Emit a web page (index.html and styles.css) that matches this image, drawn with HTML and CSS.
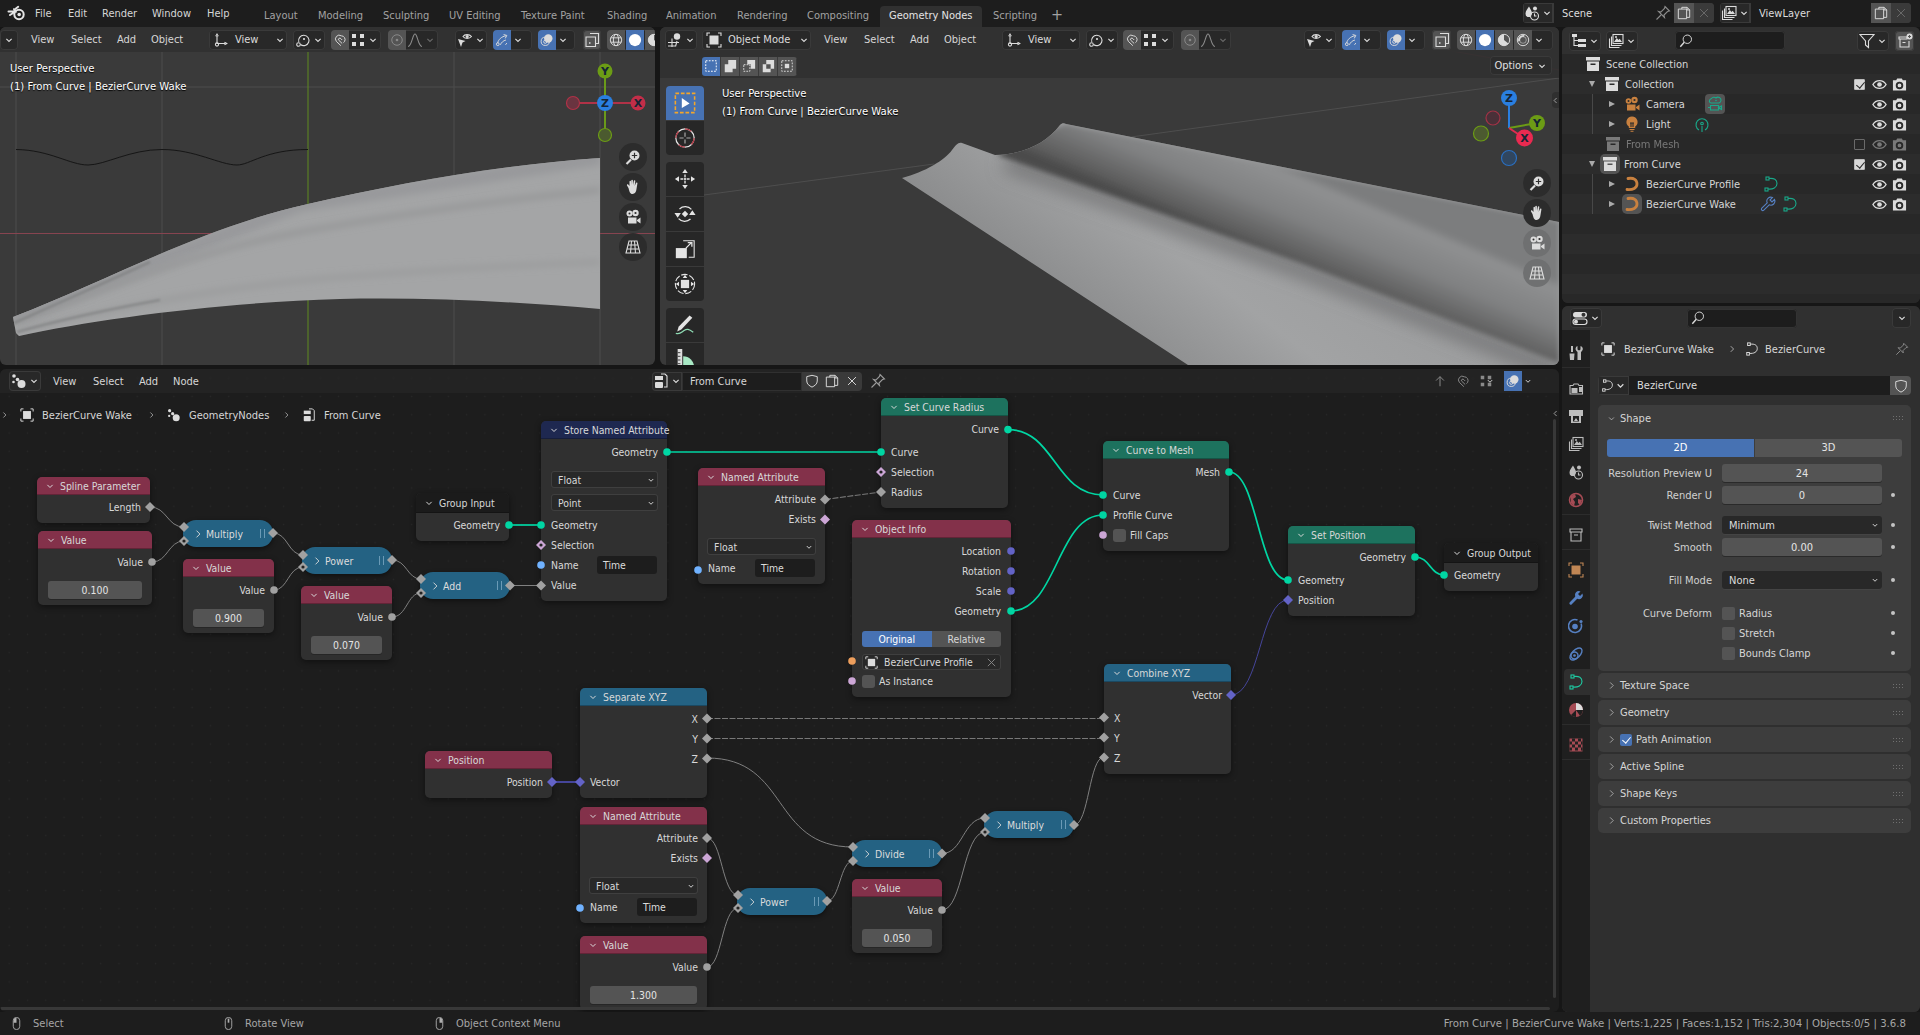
FILE: index.html
```html
<!DOCTYPE html>
<html lang="en">
<head>
<meta charset="utf-8">
<title>Blender - Geometry Nodes</title>
<link rel="stylesheet" href="styles.css">
</head>
<body>
<svg class="defs" aria-hidden="true">
  <symbol id="i-chev" viewBox="0 0 16 16"><path d="M4.5 6.5 8 10l3.5-3.5"/></symbol>
  <symbol id="i-chevr" viewBox="0 0 16 16"><path d="M6 3.5 10.5 8 6 12.5"/></symbol>
  <symbol id="i-logo" viewBox="0 0 20 16"><circle cx="12" cy="9.5" r="4.7" stroke-width="2"/><circle cx="12.2" cy="9.5" r="1.8" fill="currentColor" stroke="none"/><path d="M1.5 6.5h7L7 4.2M3 10l5.5-3.5M8 4.2l3.2-2.4" stroke-width="2" stroke-linecap="round"/></symbol>
  <symbol id="i-v3d" viewBox="0 0 16 16"><circle cx="10" cy="4.5" r="3.2" fill="currentColor" stroke="none"/><path d="M1 10.5h11M5 6.5v8.5M1 14h8M10 9l-1.500 5.500"/></symbol>
  <symbol id="i-axis" viewBox="0 0 16 16"><path d="M4 4v7.500h8M2.700 4.300 4 2l1.300 2.300M11.500 10.200l2.300 1.300-2.300 1.300"/><circle cx="4" cy="12.500" r="1.600"/></symbol>
  <symbol id="i-pivot" viewBox="0 0 16 16"><path d="M5.500 12.500A5.200 5.200 0 1 0 3.800 10"/><circle cx="9" cy="7" r="1.100" fill="currentColor" stroke="none"/><circle cx="3.500" cy="12.500" r="1.800"/></symbol>
  <symbol id="i-magnet" viewBox="0 0 16 16"><path d="M9 14.500 3.800 9.500A4.300 4.300 0 0 1 9.500 3.200 4.300 4.300 0 0 1 13.300 9.500L12 11"/><path d="M10.500 12 6.500 8.200A1.500 1.500 0 0 1 9 6.500l1.500 1.500"/></symbol>
  <symbol id="i-grid4" viewBox="0 0 16 16"><path fill="currentColor" stroke="none" d="M2 2h4v4H2zM10 2h4v4h-4zM2 10h4v4H2zM10 10h4v4h-4z"/></symbol>
  <symbol id="i-prop" viewBox="0 0 16 16"><circle cx="8" cy="8" r="6"/><circle cx="8" cy="8" r="1.500" fill="currentColor" stroke="none"/></symbol>
  <symbol id="i-fall" viewBox="0 0 16 16"><path d="M1 14.500C5 14 5.500 2 8 2s3 12 7 12.500"/></symbol>
  <symbol id="i-vis" viewBox="0 0 16 16"><path d="M6 4.500C7.500 2 12.500 2 14.500 4.500 12.500 7 7.500 7 6 4.500z"/><circle cx="10.200" cy="4.500" r="1.500" fill="currentColor" stroke="none"/><path fill="currentColor" stroke="none" d="M1 7l7.500 2-3 1.500L4 15z"/></symbol>
  <symbol id="i-gizmo" viewBox="0 0 16 16"><path d="M3 11.500C3.800 7.500 7.500 4 12.500 3.200M9.800 1.800l3.700 1-1.800 3.400M6.200 13.500C7 11 9.500 8.700 12.500 8"/><circle cx="3.200" cy="12.800" r="1.600"/><path d="M12 13.500l1.500-2"/></symbol>
  <symbol id="i-over" viewBox="0 0 16 16"><circle cx="6" cy="9.500" r="4.700"/><circle cx="9.500" cy="6.200" r="4.800" fill="currentColor" stroke="none"/><circle cx="6" cy="10" r="1.800"/></symbol>
  <symbol id="i-xray" viewBox="0 0 16 16"><path d="M6 1.500h8.500v10H12M2 5h9.500v9.500H2z"/><path d="M5 11h1.500M9 8v.1" stroke-width="1.600"/></symbol>
  <symbol id="i-wire" viewBox="0 0 16 16"><circle cx="8" cy="8" r="6.500"/><ellipse cx="8" cy="8" rx="3" ry="6.500"/><path d="M2 5.500h12M2 10.500h12"/></symbol>
  <symbol id="i-solid" viewBox="0 0 16 16"><circle cx="8" cy="8" r="7" fill="currentColor" stroke="none"/></symbol>
  <symbol id="i-mat" viewBox="0 0 16 16"><circle cx="8" cy="8" r="6.500"/><path fill="currentColor" stroke="none" d="M8 1.500V8l5 4A6.500 6.500 0 0 1 1.500 8 6.500 6.500 0 0 1 8 1.500z"/></symbol>
  <symbol id="i-rend" viewBox="0 0 16 16"><circle cx="8" cy="8" r="6.500"/><path d="M3.500 9.500A5 5 0 0 1 9.500 3.500" stroke-width="2"/><circle cx="8" cy="8" r="3.800" stroke-width=".6"/></symbol>
  <symbol id="i-s1" viewBox="0 0 16 16"><rect x="2" y="2" width="12" height="12" stroke-dasharray="2 1.500"/></symbol>
  <symbol id="i-s2" viewBox="0 0 16 16"><path fill="currentColor" stroke="none" d="M6 1h9v10h-4v4H2V6h4z"/></symbol>
  <symbol id="i-s3" viewBox="0 0 16 16"><path fill="currentColor" stroke="none" d="M6 1h9v10h-5V6H6z"/><path d="M2 6.500h7v7.500H2z" stroke-dasharray="2 1.300"/></symbol>
  <symbol id="i-s4" viewBox="0 0 16 16"><path fill="currentColor" stroke="none" fill-rule="evenodd" d="M6 1h9v10h-4v4H2V6h4zM6 6v5h5V6z"/></symbol>
  <symbol id="i-s5" viewBox="0 0 16 16"><rect x="2" y="2" width="12" height="12" stroke-dasharray="2 1.500"/><rect x="5.500" y="5.500" width="5" height="5" fill="currentColor" stroke="none"/></symbol>
  <symbol id="i-tsel" viewBox="0 0 24 24"><rect x="1.500" y="1.500" width="21" height="21" style="stroke:#f4a62a" stroke-width="1.700" stroke-dasharray="4 2"/><path fill="#fff" stroke="none" d="M8.500 6.500 17 12.500l-8.500 5z"/></symbol>
  <symbol id="i-tcur" viewBox="0 0 24 24"><circle cx="12" cy="12" r="10" stroke="#e8e8e8" stroke-width="1.300"/><path d="M12 2a10 10 0 0 1 7 2.800M22 12a10 10 0 0 1-3 7.100M12 22a10 10 0 0 1-7-2.800M2 12a10 10 0 0 1 3-7.100" stroke="#b0333f" stroke-width="1.300"/><path d="M12 6v4.500M12 13.500V18M6 12h4.500M13.500 12H18" stroke="#aaa" stroke-width="1.300"/></symbol>
  <symbol id="i-tmov" viewBox="0 0 24 24"><path fill="currentColor" stroke="none" d="M12 1l3 4.500H9zM12 23l-3-4.500h6zM1 12l4.500-3v6zM23 12l-4.500 3V9z"/><path d="M12 7v3M12 14v3M7 12h3M14 12h3" stroke-width="1.500"/><rect x="10.800" y="10.800" width="2.400" height="2.400" fill="currentColor" stroke="none" transform="rotate(45 12 12)"/></symbol>
  <symbol id="i-trot" viewBox="0 0 24 24"><path d="M6 6.500A9 9 0 0 1 19 7M18 17.500A9 9 0 0 1 5 17" stroke-width="1.300"/><path fill="currentColor" stroke="none" d="M20 8l3.500 5h-7zM4 16l-3.500-5h7z"/><rect x="9.500" y="9.500" width="5" height="5" fill="currentColor" stroke="none" transform="rotate(45 12 12)"/></symbol>
  <symbol id="i-tsca" viewBox="0 0 24 24"><path d="M10 3h12v18H16" stroke-width="1.200"/><rect x="2" y="11" width="12" height="11" fill="currentColor" stroke="none"/><path d="M13 11l6-6M15 5h4.500v4.500" stroke-width="1.400"/></symbol>
  <symbol id="i-ttra" viewBox="0 0 24 24"><circle cx="12" cy="12" r="10.500" stroke-width="1.200" stroke-dasharray="7 2"/><rect x="7.500" y="7.500" width="9" height="9" fill="currentColor" stroke="none"/><path fill="currentColor" stroke="none" d="M12 2l2.500 3.500h-5zM12 22l-2.500-3.500h5zM2 12l3.500-2.500v5zM22 12l-3.500 2.500v-5z"/></symbol>
  <symbol id="i-tann" viewBox="0 0 24 24"><path fill="currentColor" stroke="none" d="M17 1.500l3 2.500L8 17l-4.500 2L5 14z"/><path d="M2 21c4 2 6-1 9-3s5-2 10 2" stroke="#8fdcb4" stroke-width="1.400"/></symbol>
  <symbol id="i-tmea" viewBox="0 0 24 24"><path fill="#a8e8c4" stroke="none" d="M10 8a12 12 0 0 1 12 12v4H10z"/><path d="M4 0h5v24H4z" fill="#ddd" stroke="none"/><path d="M4 4h3M4 8h3M4 12h3M4 16h3" stroke="#333"/></symbol>
  <symbol id="i-nzoom" viewBox="0 0 16 16"><circle cx="9.500" cy="6.500" r="5" fill="currentColor" stroke="none"/><path d="M6 10.500 1.500 15" stroke-width="2.200"/><path d="M9.500 3.800v5.400M6.800 6.500h5.400" stroke="#2e2e2e" stroke-width="1.200"/></symbol>
  <symbol id="i-nhand" viewBox="0 0 16 16"><path fill="currentColor" stroke="none" d="M3.500 9 2 6.500c-.5-1 .8-1.700 1.400-.8L4.500 7V2.500c0-1.100 1.500-1.100 1.500 0V6l.3-4.500c0-1.100 1.600-1.100 1.600 0L8 6l.8-4c.2-1 1.600-.8 1.500.3L9.700 7l1.200-3c.4-1 1.800-.5 1.500.5L11.500 10c-.3 2.800-1.500 5-4 5-2 0-3-1.500-4-6z"/></symbol>
  <symbol id="i-ncam" viewBox="0 0 16 16"><circle cx="4.500" cy="4.500" r="3" fill="currentColor" stroke="none"/><circle cx="10.500" cy="4" r="3.200" fill="currentColor" stroke="none"/><rect x="3" y="8.500" width="8.500" height="6" fill="currentColor" stroke="none"/><path fill="currentColor" stroke="none" d="M12 11l3.500-2.500v6L12 12z"/><circle cx="4.500" cy="4.500" r="1" fill="#2e2e2e" stroke="none"/><circle cx="10.500" cy="4" r="1.100" fill="#2e2e2e" stroke="none"/></symbol>
  <symbol id="i-ngrid" viewBox="0 0 16 16"><path d="M4 2h8l3 12H1zM3 6h10M2 10h12M6.500 2 5.500 14M9.500 2l1 12"/></symbol>
  <symbol id="i-scene" viewBox="0 0 16 16"><path fill="currentColor" stroke="none" d="M5 1.500c1.500 3 3 4.500 3 7a3 3 0 0 1-2 2.800V12H3.500A3.300 3.300 0 0 1 1.500 8.800C1.500 6 3.500 4 5 1.500z"/><circle cx="11" cy="3.500" r="2" fill="currentColor" stroke="none"/><circle cx="10.500" cy="11" r="4"/><path d="M10.500 8.500V11h2"/></symbol>
  <symbol id="i-layer" viewBox="0 0 16 16"><rect x="5" y="1.500" width="10" height="9" fill="none"/><path fill="currentColor" stroke="none" d="M6 9l2.800-4 1.700 2 1.200-1.200L14 9z"/><circle cx="8" cy="4" r="1" fill="currentColor" stroke="none"/><path d="M3.500 3.500v9h10M1.500 5.500v9h10"/></symbol>
  <symbol id="i-pin" viewBox="0 0 16 16"><path d="M10 1.500 14.500 6l-2 .5L9 10l.5 2.500L3.500 6.500 6 7l3.500-3.500zM6 10l-4.500 4.500"/></symbol>
  <symbol id="i-copy" viewBox="0 0 16 16"><path d="M5.500 3.500V1.500h6l3 3v8.500H11"/><path d="M1.500 3.500h9.500v11H1.500zM11.500 1.500v3h3"/></symbol>
  <symbol id="i-x" viewBox="0 0 16 16"><path d="M3.500 3.500l9 9M12.500 3.500l-9 9"/></symbol>
  <symbol id="i-tree" viewBox="0 0 16 16"><path fill="currentColor" stroke="none" d="M1 1h5v3H1zM7 6h8v3H7zM7 11h8v3H7z"/><path d="M3 4v8.500h4M3 7.500h4"/></symbol>
  <symbol id="i-search" viewBox="0 0 16 16"><circle cx="9.500" cy="6" r="4.800"/><path d="M6 9.500 1.500 14.500" stroke-width="1.600"/></symbol>
  <symbol id="i-filter" viewBox="0 0 16 16"><path d="M1 1.500h14L9.500 8v6.500L6.500 12V8z"/></symbol>
  <symbol id="i-newc" viewBox="0 0 16 16"><path d="M2 4h8v2H2zM3 6v8h9V8M5.500 9.500h3"/><circle cx="12.500" cy="3.500" r="3" fill="currentColor" stroke="none"/><path d="M12.500 2v3M11 3.500h3" stroke="#555"/></symbol>
  <symbol id="i-coll" viewBox="0 0 16 16"><path fill="currentColor" stroke="none" fill-rule="evenodd" d="M1 1h14v3.500H1zM2 5.500h12V15H2zM5.500 7.500v1.500h5V7.500z"/></symbol>
  <symbol id="i-ocam" viewBox="0 0 16 16"><circle cx="4.500" cy="5" r="2.800" fill="currentColor" stroke="none"/><circle cx="10.500" cy="4" r="3.200" fill="currentColor" stroke="none"/><rect x="3" y="8.500" width="8.500" height="6" fill="currentColor" stroke="none"/><path fill="currentColor" stroke="none" d="M12 11l3.500-2.500v6L12 12z"/><circle cx="4.500" cy="5" r="1" fill="#2b2b2b" stroke="none"/><circle cx="10.500" cy="4" r="1.100" fill="#2b2b2b" stroke="none"/></symbol>
  <symbol id="i-olight" viewBox="0 0 16 16"><path fill="currentColor" stroke="none" d="M8 .5a5.500 5.500 0 0 1 3.200 10v1.500H4.800v-1.500A5.500 5.500 0 0 1 8 .5zM5.500 13h5v1h-5zM6.500 14.800h3v1h-3z"/><path d="M6 7h4M7 7v4M9 7v4" stroke="#2b2b2b"/></symbol>
  <symbol id="i-ocurve" viewBox="0 0 16 16"><path d="M4 2.500c6-1 9 1.500 9 5.500s-4 6-10 5.500" stroke-width="2.800" stroke-linecap="round"/></symbol>
  <symbol id="i-dcam" viewBox="0 0 16 16"><path d="M2.500 6a3 3 0 0 1 2-3.500 3 3 0 0 1 4.500-.5 3 3 0 0 1 5 2.500 3 3 0 0 1-2 2.500H4a3 3 0 0 1-1.500-1z"/><circle cx="9" cy="4.500" r=".8" fill="currentColor" stroke="none"/><path d="M3.500 9.500h8v4.500h-8zM11.500 11.500l3-1.500v3.500zM1 11.500h2.500"/></symbol>
  <symbol id="i-dlight" viewBox="0 0 16 16"><path d="M5 14A6 6 0 1 1 11 14M8 16v-6"/><circle cx="8" cy="7.500" r="1.300" /></symbol>
  <symbol id="i-dcurve" viewBox="0 0 16 16"><path d="M6 2.500c5-.5 8 1 8 5s-4 6-9 5.500"/><rect x="3" y="1" width="3" height="3"/><rect x="2" y="12" width="3" height="3"/></symbol>
  <symbol id="i-wrench" viewBox="0 0 16 16"><path d="M14.500 3.500 12 6 10 4l2.500-2.500a4 4 0 0 0-5.300 5.300L1.800 12.200a1.400 1.400 0 0 0 2 2l5.400-5.400a4 4 0 0 0 5.300-5.300z"/></symbol>
  <symbol id="i-wrenchf" viewBox="0 0 16 16"><path fill="currentColor" stroke="none" d="M14.500 3.500 12 6 10 4l2.500-2.500a4 4 0 0 0-5.300 5.300L1.800 12.200a1.400 1.400 0 0 0 2 2l5.400-5.400a4 4 0 0 0 5.300-5.300z"/></symbol>
  <symbol id="i-eye" viewBox="0 0 16 16"><path d="M1 8c3-5.500 11-5.500 14 0-3 5.500-11 5.500-14 0z" stroke-width="1.500"/><circle cx="8" cy="8" r="2.500" fill="currentColor" stroke="none"/></symbol>
  <symbol id="i-rcam" viewBox="0 0 16 16"><path fill="currentColor" stroke="none" fill-rule="evenodd" d="M1 3.500h3.500l1-2h5l1 2H15v11H1zM8 5a4 4 0 1 0 0 8 4 4 0 0 0 0-8zM8 7a2 2 0 1 1 0 4 2 2 0 0 1 0-4z"/></symbol>
  <symbol id="i-props" viewBox="0 0 16 16"><rect x="1" y="2" width="14" height="5.500" rx="2.700" fill="currentColor" stroke="none"/><rect x="1" y="9" width="14" height="5.500" rx="2.700"/><circle cx="11.500" cy="4.700" r="2" fill="#333" stroke="none"/><circle cx="4" cy="11.700" r="2" fill="currentColor" stroke="none"/></symbol>
  <symbol id="i-obj" viewBox="0 0 16 16"><path d="M1 4V1h3M12 1h3v3M1 12v3h3M15 12v3h-3"/><rect x="3.500" y="3.500" width="9" height="9" fill="currentColor" stroke="none"/></symbol>
  <symbol id="i-tool" viewBox="0 0 16 16"><path fill="currentColor" stroke="none" d="M9.500 1v3.500l1.500 1 1.500-1V1a3 3 0 0 1 1.500 5l-1 1v8h-3.500V7l-1-1a3 3 0 0 1 1-5zM3 1h2v6H3zM1.500 8.500h5l-.5 6.500H2z"/></symbol>
  <symbol id="i-rnd" viewBox="0 0 16 16"><path d="M2 5.500h3l1-1.500h4l1 1.500h3.500v8.500H2z"/><path fill="currentColor" stroke="none" d="M11 7h3v5h-3zM3.500 8h6v5h-6z"/></symbol>
  <symbol id="i-out" viewBox="0 0 16 16"><path fill="currentColor" stroke="none" d="M1 2h14v6h-2v7H3V8H1zM5 8v5.500h6V8z"/><path fill="currentColor" stroke="none" d="M6 13l2-3 2 3z"/></symbol>
  <symbol id="i-world" viewBox="0 0 16 16"><circle cx="8" cy="8" r="6.500" stroke-width="1.600"/><path fill="currentColor" stroke="none" d="M3 4l4-2 1 3-3 2 2 3-1 4-3-3zM10 7l4 1-2 5-2-2z"/></symbol>
  <symbol id="i-cbox" viewBox="0 0 16 16"><path d="M2 2h12v3H2zM3 5v9h10V5M6 8h4"/></symbol>
  <symbol id="i-objt" viewBox="0 0 16 16"><path d="M1 4V1h3M12 1h3v3M1 12v3h3M15 12v3h-3" stroke="#c08654"/><rect x="3.500" y="3.500" width="9" height="9" fill="#c08654" stroke="none"/></symbol>
  <symbol id="i-part" viewBox="0 0 16 16"><path d="M13 5.500A6.500 6.500 0 1 1 9.500 2" stroke-width="1.600"/><circle cx="7" cy="8.500" r="2.800" fill="currentColor" stroke="none"/><circle cx="13" cy="3.500" r="1.600" fill="currentColor" stroke="none"/></symbol>
  <symbol id="i-phys" viewBox="0 0 16 16"><ellipse cx="8" cy="8" rx="7.500" ry="4" transform="rotate(-45 8 8)" stroke-width="1.400"/><circle cx="6.500" cy="9.500" r="3.500" stroke-width="1.400"/><circle cx="6.500" cy="9.500" r="1.300" fill="currentColor" stroke="none"/></symbol>
  <symbol id="i-matt" viewBox="0 0 16 16"><circle cx="8" cy="8" r="7" fill="#a54b54" stroke="none"/><path fill="#ddd" stroke="none" d="M8 1a7 7 0 0 1 7 7H8z"/><path fill="#1f1f1f" stroke="none" d="M8 8h7a7 7 0 0 1-3 5.700zM8 8v7a7 7 0 0 1-5-2z"/></symbol>
  <symbol id="i-tex" viewBox="0 0 16 16"><rect x="1.500" y="1.500" width="13" height="13" fill="#a54b54" stroke="none"/><path fill="#222" stroke="none" d="M4 1.500h3v3H4zM10 1.500h3v3h-3zM1.500 4.500H4v3H1.500zM7 4.500h3v3H7zM13 4.500h1.500v3H13zM4 7.500h3v3H4zM10 7.500h3v3h-3zM1.500 10.500H4v3H1.500zM7 10.500h3v3H7zM13 10.500h1.500v3H13z"/></symbol>
  <symbol id="i-shield" viewBox="0 0 16 16"><path d="M8 1.500 14 3v5c0 3.500-3 5.500-6 7-3-1.500-6-3.500-6-7V3z"/></symbol>
  <symbol id="i-mods" viewBox="0 0 16 16"><circle cx="3" cy="3" r="1.800" fill="currentColor" stroke="none"/><circle cx="6.500" cy="6.500" r="1.800" fill="currentColor" stroke="none"/><circle cx="2.500" cy="9" r="1.300" fill="currentColor" stroke="none"/><circle cx="10.500" cy="11" r="4" fill="currentColor" stroke="none"/></symbol>
  <symbol id="i-ngroup" viewBox="0 0 16 16"><path d="M8 1h4l2 2v11h-3"/><rect x="2" y="3" width="8" height="4" fill="currentColor" stroke="none"/><rect x="2" y="9" width="8" height="6" fill="currentColor" stroke="none" rx="1"/></symbol>
  <symbol id="i-mouse" viewBox="0 0 16 16"><path d="M4 4.500a4 4 0 0 1 8 0v7a4 4 0 0 1-8 0z"/><path fill="currentColor" stroke="none" d="M8 1a3.500 3.500 0 0 1 3.500 3.500V7H8z"/></symbol>
  <symbol id="i-mousel" viewBox="0 0 16 16"><path d="M4 4.500a4 4 0 0 1 8 0v7a4 4 0 0 1-8 0z"/><path fill="currentColor" stroke="none" d="M8 1a3.500 3.500 0 0 0-3.500 3.500V7H8z"/></symbol>
  <symbol id="i-mousem" viewBox="0 0 16 16"><path d="M4 4.500a4 4 0 0 1 8 0v7a4 4 0 0 1-8 0z"/><path fill="currentColor" stroke="none" d="M7 2h2v5H7z"/></symbol>
  <symbol id="i-up" viewBox="0 0 16 16"><path d="M8 14V3M3.500 7.500 8 3l4.500 4.500"/></symbol>
  <symbol id="d" viewBox="-6 -6 12 12" overflow="visible"><path d="M0-5 5 0 0 5-5 0z"/></symbol>
  <symbol id="h" viewBox="-6 -6 12 12" overflow="visible"><path d="M0-5 5 0 0 5-5 0z"/><circle r="1.600" fill="#222"/></symbol>
</svg>

<div class="app">
  <header class="topbar">
    <svg class="ic logo"><use href="#i-logo"/></svg>
    <nav class="mainmenu"><span>File</span><span>Edit</span><span>Render</span><span>Window</span><span>Help</span></nav>
    <nav class="tabs">
      <span>Layout</span><span>Modeling</span><span>Sculpting</span><span>UV Editing</span><span>Texture Paint</span><span>Shading</span><span>Animation</span><span>Rendering</span><span>Compositing</span><span class="on">Geometry Nodes</span><span>Scripting</span><span class="plus">+</span>
    </nav>
    <div class="scenegroup scene-a">
      <div class="box ib"><svg class="ic"><use href="#i-scene"/></svg><svg class="ic ch"><use href="#i-chev"/></svg></div>
      <div class="field"><span>Scene</span><svg class="ic dim"><use href="#i-pin"/></svg></div>
      <div class="sq lit"><svg class="ic"><use href="#i-copy"/></svg></div><div class="sq"><svg class="ic off"><use href="#i-x"/></svg></div>
    </div>
    <div class="scenegroup scene-b">
      <div class="box ib"><svg class="ic"><use href="#i-layer"/></svg><svg class="ic ch"><use href="#i-chev"/></svg></div>
      <div class="field"><span>ViewLayer</span></div>
      <div class="sq lit"><svg class="ic"><use href="#i-copy"/></svg></div><div class="sq"><svg class="ic off"><use href="#i-x"/></svg></div>
    </div>
  </header>

  <main class="screen">
    <div class="leftcol">
      <div class="toprow">
        <section class="area vp vp-l">
          <svg class="scene3d" viewBox="0 27 655 338" aria-hidden="true">
            <defs>
              <filter id="b3" x="-20%" y="-50%" width="140%" height="200%"><feGaussianBlur stdDeviation="3.500"/></filter>
              <filter id="b1" x="-20%" y="-50%" width="140%" height="200%"><feGaussianBlur stdDeviation="1.200"/></filter>
              <clipPath id="cl"><path d="M13 317C110 280 200 228 308 204 400 183 500 165 600 158L600 309C520 302 430 297 340 299 230 302 100 318 19 336L16 333z"/></clipPath>
            </defs>
            <path class="g" d="M16 52V365M162 52V365M454 52V365M600 52V365M0 87H655"/>
            <path class="gx" d="M0 233.500H655"/>
            <path class="gy" d="M308 52V365"/>
            <path d="M16 149.500C50 150 70 165 88 165 105 165 130 149.500 162 149.500 195 149.500 220 165 237 165 250 165 265 149.500 308 149.500" fill="none" stroke="#161616" stroke-width="1"/>
            <path d="M13 317C110 280 200 228 308 204 400 183 500 165 600 158L600 309C520 302 430 297 340 299 230 302 100 318 19 336L16 333z" fill="#a4a5a6"/>
            <g clip-path="url(#cl)">
              <path d="M600 158 300 205 13 317" fill="none" stroke="#98999b" stroke-width="14" filter="url(#b3)"/>
              <path d="M14 323C120 285 200 250 300 232 400 214 500 200 600 190" fill="none" stroke="#949596" stroke-width="5" filter="url(#b3)"/>
              <path d="M17 332C120 307 220 287 330 278 430 270 520 265 600 262" fill="none" stroke="#98999a" stroke-width="4" filter="url(#b3)"/>
              <path d="M14 323C60 302 100 285 150 262" fill="none" stroke="#858687" stroke-width="2.500" filter="url(#b1)"/>
              <path d="M17 332C60 320 110 309 160 300" fill="none" stroke="#88898a" stroke-width="2.500" filter="url(#b1)"/>
            </g>
            <g class="giz">
              <path d="M605 103V71M605 103V135" stroke="#6a9a1a" stroke-width="2"/><path d="M573 103H638" stroke="#b03247" stroke-width="2"/>
              <circle cx="605" cy="71" r="7.500" fill="#6c9c15"/><circle cx="605" cy="135" r="6.500" fill="#4b5a2f" stroke="#6c9c15" stroke-width="1.200"/>
              <circle cx="638" cy="103" r="7.500" fill="#c22e48"/><circle cx="573" cy="103" r="6.500" fill="#6a3440" stroke="#b03247" stroke-width="1.200"/>
              <circle cx="605" cy="103" r="8" fill="#2a7fe0"/>
              <text x="605" y="75">Y</text><text x="638" y="107">X</text><text x="605" y="107">Z</text>
            </g>
          </svg>
          <div class="hbar">
            <div class="box w18 c"><svg class="ic ch"><use href="#i-chev"/></svg></div>
            <nav class="menus"><span>View</span><span>Select</span><span>Add</span><span>Object</span></nav>
            <div class="box w78"><svg class="ic"><use href="#i-axis"/></svg><span class="bt">View</span><svg class="ic ch end"><use href="#i-chev"/></svg></div>
            <div class="box w32 ml6"><svg class="ic"><use href="#i-pivot"/></svg><svg class="ic ch"><use href="#i-chev"/></svg></div>
            <div class="box w50 ml6"><span class="seg lit"><svg class="ic"><use href="#i-magnet"/></svg></span><svg class="ic"><use href="#i-grid4"/></svg><svg class="ic ch"><use href="#i-chev"/></svg></div>
            <div class="box w50 ml7"><span class="seg lit"><svg class="ic dim"><use href="#i-prop"/></svg></span><svg class="ic dim"><use href="#i-fall"/></svg><svg class="ic ch off"><use href="#i-chev"/></svg></div>
            <div class="box w32 ml17"><svg class="ic"><use href="#i-vis"/></svg><svg class="ic ch"><use href="#i-chev"/></svg></div>
            <div class="box w39 ml6"><span class="seg blue"><svg class="ic"><use href="#i-gizmo"/></svg></span><svg class="ic ch"><use href="#i-chev"/></svg></div>
            <div class="box w37 ml6"><span class="seg blue"><svg class="ic"><use href="#i-over"/></svg></span><svg class="ic ch"><use href="#i-chev"/></svg></div>
            <div class="box w18 ml8 lit"><svg class="ic"><use href="#i-xray"/></svg></div>
            <div class="box w81 ml6"><span class="seg lit"><svg class="ic"><use href="#i-wire"/></svg></span><span class="seg blue"><svg class="ic wh"><use href="#i-solid"/></svg></span><span class="seg lit"><svg class="ic"><use href="#i-mat"/></svg></span></div>
          </div>
          <div class="overlaytext ot-l"><p>User Perspective</p><p>(1) From Curve | BezierCurve Wake</p></div>
          <div class="navstack nav-l">
            <span><svg class="ic"><use href="#i-nzoom"/></svg></span><span><svg class="ic"><use href="#i-nhand"/></svg></span><span><svg class="ic"><use href="#i-ncam"/></svg></span><span><svg class="ic"><use href="#i-ngrid"/></svg></span>
          </div>
        </section>

        <section class="area vp vp-r">
          <svg class="scene3d" viewBox="660 27 899 338" aria-hidden="true">
            <defs>
              <clipPath id="cr"><path d="M902 178C925 172 945 160 952 150 956 145 958 142 962 143L995 155C1020 155 1045 145 1060 125 1062 123 1064 123 1066 124L1559 222V365H1188z"/></clipPath>
              <filter id="b14" x="-20%" y="-50%" width="140%" height="200%"><feGaussianBlur stdDeviation="9"/></filter>
              <filter id="b3r" x="-20%" y="-50%" width="140%" height="200%"><feGaussianBlur stdDeviation="2.500"/></filter>
              <linearGradient id="gr" x1="1050" y1="300" x2="1200" y2="100" gradientUnits="userSpaceOnUse"><stop offset="0" stop-color="#8a8b8c"/><stop offset=".45" stop-color="#a2a3a4"/><stop offset="1" stop-color="#9a9b9c"/></linearGradient>
              <linearGradient id="lobe" x1="1310" y1="175" x2="1275" y2="258" gradientUnits="userSpaceOnUse"><stop offset="0" stop-color="#7c7d7e"/><stop offset=".1" stop-color="#8f9091"/><stop offset=".5" stop-color="#808182"/><stop offset=".88" stop-color="#5e5e5e"/><stop offset="1" stop-color="#4c4c4c"/></linearGradient>
            </defs>
            <path d="M704 195 934 164M1131 137 1559 78" stroke="#4e4e4e" fill="none"/>
            <path d="M1390 40 1559 70" stroke="#57383e" fill="none"/>
            <g clip-path="url(#cr)">
              <rect x="890" y="110" width="680" height="260" fill="url(#gr)"/>
              <path d="M1005 163 1300 270 1559 372" stroke="#6a6b6c" stroke-width="12" fill="none" filter="url(#b14)"/>
              <path d="M997 155 1050 130 1066 124 1559 222 1559 363 1300 263z" fill="url(#lobe)" filter="url(#b3r)"/>
            </g>
            <g class="giz">
              <circle cx="1493" cy="118" r="7" fill="#4a3038" stroke="#a23246" stroke-width="1.200"/>
              <circle cx="1481" cy="133.500" r="7.500" fill="#4c5a30" stroke="#6c9c15" stroke-width="1.200"/>
              <circle cx="1509" cy="158" r="7.500" fill="#30465f" stroke="#2a6fc0" stroke-width="1.200"/>
              <path d="M1509 128V98" stroke="#2a7fe0" stroke-width="2"/><path d="M1509 128 1537 123" stroke="#6c9c15" stroke-width="2"/><path d="M1509 128 1524 138" stroke="#e02c50" stroke-width="2"/>
              <circle cx="1509" cy="98" r="8" fill="#2a7fe0"/><circle cx="1537" cy="123" r="8" fill="#6c9c15"/><circle cx="1524.500" cy="138" r="8.500" fill="#e92a50"/>
              <text x="1509" y="102">Z</text><text x="1537" y="127">Y</text><text x="1524.500" y="142">X</text>
            </g>
          </svg>
          <div class="hbar">
            <div class="box w32 ml5"><svg class="ic"><use href="#i-v3d"/></svg><svg class="ic ch"><use href="#i-chev"/></svg></div>
            <div class="box w109 ml5"><svg class="ic"><use href="#i-obj"/></svg><span class="bt">Object Mode</span><svg class="ic ch end"><use href="#i-chev"/></svg></div>
            <nav class="menus"><span>View</span><span>Select</span><span>Add</span><span>Object</span></nav>
            <div class="box w78"><svg class="ic"><use href="#i-axis"/></svg><span class="bt">View</span><svg class="ic ch end"><use href="#i-chev"/></svg></div>
            <div class="box w32 ml6"><svg class="ic"><use href="#i-pivot"/></svg><svg class="ic ch"><use href="#i-chev"/></svg></div>
            <div class="box w51 ml5"><span class="seg lit"><svg class="ic"><use href="#i-magnet"/></svg></span><svg class="ic"><use href="#i-grid4"/></svg><svg class="ic ch"><use href="#i-chev"/></svg></div>
            <div class="box w50 ml7"><span class="seg lit"><svg class="ic dim"><use href="#i-prop"/></svg></span><svg class="ic dim"><use href="#i-fall"/></svg><svg class="ic ch off"><use href="#i-chev"/></svg></div>
            <div class="box w32 ml73"><svg class="ic"><use href="#i-vis"/></svg><svg class="ic ch"><use href="#i-chev"/></svg></div>
            <div class="box w39 ml6"><span class="seg blue"><svg class="ic"><use href="#i-gizmo"/></svg></span><svg class="ic ch"><use href="#i-chev"/></svg></div>
            <div class="box w38 ml6"><span class="seg blue"><svg class="ic"><use href="#i-over"/></svg></span><svg class="ic ch"><use href="#i-chev"/></svg></div>
            <div class="box w19 ml7 lit"><svg class="ic"><use href="#i-xray"/></svg></div>
            <div class="box w96 ml6"><span class="seg lit"><svg class="ic"><use href="#i-wire"/></svg></span><span class="seg blue"><svg class="ic wh"><use href="#i-solid"/></svg></span><span class="seg lit"><svg class="ic"><use href="#i-mat"/></svg></span><span class="seg lit"><svg class="ic"><use href="#i-rend"/></svg></span><svg class="ic ch"><use href="#i-chev"/></svg></div>
          </div>
          <div class="toolsettings">
            <div class="modes"><span class="blue"><svg class="ic wh"><use href="#i-s1"/></svg></span><span><svg class="ic"><use href="#i-s2"/></svg></span><span><svg class="ic"><use href="#i-s3"/></svg></span><span><svg class="ic"><use href="#i-s4"/></svg></span><span><svg class="ic"><use href="#i-s5"/></svg></span></div>
            <div class="box options"><span>Options</span><svg class="ic ch"><use href="#i-chev"/></svg></div>
          </div>
          <div class="toolbar">
            <div class="tg">
              <span class="blue"><svg class="tic"><use href="#i-tsel"/></svg></span>
              <span><svg class="tic"><use href="#i-tcur"/></svg></span>
            </div>
            <div class="tg">
              <span><svg class="tic"><use href="#i-tmov"/></svg></span><span><svg class="tic"><use href="#i-trot"/></svg></span><span><svg class="tic"><use href="#i-tsca"/></svg></span><span><svg class="tic"><use href="#i-ttra"/></svg></span>
            </div>
            <div class="tg">
              <span><svg class="tic"><use href="#i-tann"/></svg></span><span><svg class="tic"><use href="#i-tmea"/></svg></span>
            </div>
          </div>
          <div class="overlaytext ot-r"><p>User Perspective</p><p>(1) From Curve | BezierCurve Wake</p></div>
          <div class="navstack nav-r">
            <span><svg class="ic"><use href="#i-nzoom"/></svg></span><span><svg class="ic"><use href="#i-nhand"/></svg></span><span class="gr"><svg class="ic"><use href="#i-ncam"/></svg></span><span class="gr"><svg class="ic"><use href="#i-ngrid"/></svg></span>
          </div>
          <span class="sidearrow"><svg class="ic"><use href="#i-chevr"/></svg></span>
        </section>
      </div>

      <section class="area ne">
        <div class="hbar ne-h">
          <div class="box w32 ml9"><svg class="ic"><use href="#i-mods"/></svg><svg class="ic ch"><use href="#i-chev"/></svg></div>
          <nav class="menus nm"><span>View</span><span>Select</span><span>Add</span><span>Node</span></nav>
          <div class="idgroup">
            <div class="box ib2"><svg class="ic"><use href="#i-ngroup"/></svg><svg class="ic ch"><use href="#i-chev"/></svg></div>
            <div class="field idf"><span>From Curve</span></div>
            <div class="sq"><svg class="ic"><use href="#i-shield"/></svg></div><div class="sq"><svg class="ic"><use href="#i-copy"/></svg></div><div class="sq"><svg class="ic"><use href="#i-x"/></svg></div>
          </div>
          <svg class="ic pinne"><use href="#i-pin"/></svg>
          <div class="ne-right">
            <svg class="ic dim"><use href="#i-up"/></svg>
            <svg class="ic dim"><use href="#i-magnet"/></svg>
            <span class="r2"><svg class="ic dim"><use href="#i-grid4"/></svg><svg class="ic ch"><use href="#i-chev"/></svg></span>
            <span class="seg blue"><svg class="ic"><use href="#i-over"/></svg></span><svg class="ic ch"><use href="#i-chev"/></svg>
          </div>
        </div>
        <div class="crumbs">
          <svg class="ic cr0"><use href="#i-chevr"/></svg>
          <svg class="ic"><use href="#i-obj"/></svg><span>BezierCurve Wake</span>
          <svg class="ic cr1"><use href="#i-chevr"/></svg>
          <svg class="ic"><use href="#i-mods"/></svg><span>GeometryNodes</span>
          <svg class="ic cr1"><use href="#i-chevr"/></svg>
          <svg class="ic"><use href="#i-ngroup"/></svg><span>From Curve</span>
        </div>
        <div class="canvas">
          <svg class="wires" viewBox="0 0 1560 1035" aria-hidden="true">
            <g class="wg">
              <path d="M150 507C167 507 167 527 184 527"/><path d="M152 562C168 562 168 541 184 541"/>
              <path d="M273 533C288 533 288 555 303 555"/><path d="M274 590C288 590 288 567 303 567"/>
              <path d="M392 560C407 560 407 579 421 579"/><path d="M392 617C407 617 407 593 421 593"/>
              <path d="M510 585.500H541"/>
              <path d="M707 758C790 758 770 847 853 847"/>
              <path d="M707 838C722 838 722 895 738 895"/><path d="M707 967C722 967 722 908 738 908"/>
              <path d="M827 901C840 901 840 861 853 861"/>
              <path d="M942 853.500C963 853.500 963 818 985 818"/><path d="M942 910C963 910 963 832 985 832"/>
              <path d="M1074 825C1089 825 1089 757 1104 757"/>
            </g>
            <g class="wd"><path d="M825 499.500 881 492"/><path d="M707 718.500H1104"/><path d="M707 738.500H1104"/></g>
            <g class="wgeo">
              <path d="M509 525H541"/><path d="M667 452H881"/>
              <path d="M1008 429.600C1055 429.600 1055 495 1103 495"/>
              <path d="M1011 611C1057 611 1057 515 1103 515"/>
              <path d="M1229 472C1258 472 1258 580 1288 580"/>
              <path d="M1415 557C1430 557 1430 575 1444 575"/>
            </g>
            <g class="wvec"><path d="M1231 695C1260 695 1260 600 1288 600"/><path class="thick" d="M552 782H580"/></g>
          </svg>

          <div class="node n-spline"><div class="nh red"><svg class="ic nc"><use href="#i-chev"/></svg>Spline Parameter</div><div class="r o">Length</div></div>
          <div class="node n-v1"><div class="nh red"><svg class="ic nc"><use href="#i-chev"/></svg>Value</div><div class="r o">Value</div><div class="inp">0.100</div></div>
          <div class="node n-v2"><div class="nh red"><svg class="ic nc"><use href="#i-chev"/></svg>Value</div><div class="r o">Value</div><div class="inp">0.900</div></div>
          <div class="node n-v3"><div class="nh red"><svg class="ic nc"><use href="#i-chev"/></svg>Value</div><div class="r o">Value</div><div class="inp">0.070</div></div>
          <div class="mn m1"><svg class="ic nc2"><use href="#i-chevr"/></svg><span>Multiply</span><i></i></div>
          <div class="mn m2"><svg class="ic nc2"><use href="#i-chevr"/></svg><span>Power</span><i></i></div>
          <div class="mn m3"><svg class="ic nc2"><use href="#i-chevr"/></svg><span>Add</span><i></i></div>
          <div class="node n-gi"><div class="nh blk gh"><svg class="ic nc"><use href="#i-chev"/></svg>Group Input</div><div class="r o">Geometry</div></div>
          <div class="node n-store"><div class="nh navy"><svg class="ic nc"><use href="#i-chev"/></svg>Store Named Attribute</div><div class="r o">Geometry</div>
            <div class="sel first"><span>Float</span><svg class="ic ch"><use href="#i-chev"/></svg></div><div class="sel"><span>Point</span><svg class="ic ch"><use href="#i-chev"/></svg></div>
            <div class="r i tight">Geometry</div><div class="r i">Selection</div><div class="r i nm2"><span>Name</span><b class="txt">Time</b></div><div class="r i">Value</div></div>
          <div class="node n-scr"><div class="nh grn"><svg class="ic nc"><use href="#i-chev"/></svg>Set Curve Radius</div><div class="r o">Curve</div><div class="r i mt3">Curve</div><div class="r i">Selection</div><div class="r i">Radius</div></div>
          <div class="node n-na1"><div class="nh red"><svg class="ic nc"><use href="#i-chev"/></svg>Named Attribute</div><div class="r o">Attribute</div><div class="r o">Exists</div>
            <div class="sel first"><span>Float</span><svg class="ic ch"><use href="#i-chev"/></svg></div><div class="r i nm2 mt3"><span>Name</span><b class="txt">Time</b></div></div>
          <div class="node n-oi"><div class="nh red"><svg class="ic nc"><use href="#i-chev"/></svg>Object Info</div><div class="r o">Location</div><div class="r o">Rotation</div><div class="r o">Scale</div><div class="r o">Geometry</div>
            <div class="pair"><span class="blue">Original</span><span>Relative</span></div>
            <div class="objf"><svg class="ic"><use href="#i-obj"/></svg><span>BezierCurve Profile</span><svg class="ic dim"><use href="#i-x"/></svg></div>
            <div class="r i mt1"><em class="cb"></em>As Instance</div></div>
          <div class="node n-c2m"><div class="nh grn"><svg class="ic nc"><use href="#i-chev"/></svg>Curve to Mesh</div><div class="r o">Mesh</div><div class="r i mt3">Curve</div><div class="r i">Profile Curve</div><div class="r i"><em class="cb"></em>Fill Caps</div></div>
          <div class="node n-sp"><div class="nh grn"><svg class="ic nc"><use href="#i-chev"/></svg>Set Position</div><div class="r o">Geometry</div><div class="r i mt3">Geometry</div><div class="r i">Position</div></div>
          <div class="node n-go"><div class="nh blk gh"><svg class="ic nc"><use href="#i-chev"/></svg>Group Output</div><div class="r i">Geometry</div></div>
          <div class="node n-cxyz"><div class="nh blu"><svg class="ic nc"><use href="#i-chev"/></svg>Combine XYZ</div><div class="r o">Vector</div><div class="r i mt3">X</div><div class="r i">Y</div><div class="r i">Z</div></div>
          <div class="node n-sxyz"><div class="nh blu"><svg class="ic nc"><use href="#i-chev"/></svg>Separate XYZ</div><div class="r o">X</div><div class="r o">Y</div><div class="r o">Z</div><div class="r i mt3">Vector</div></div>
          <div class="node n-pos"><div class="nh red"><svg class="ic nc"><use href="#i-chev"/></svg>Position</div><div class="r o">Position</div></div>
          <div class="node n-na2"><div class="nh red"><svg class="ic nc"><use href="#i-chev"/></svg>Named Attribute</div><div class="r o">Attribute</div><div class="r o">Exists</div>
            <div class="sel first"><span>Float</span><svg class="ic ch"><use href="#i-chev"/></svg></div><div class="r i nm2 mt3"><span>Name</span><b class="txt">Time</b></div></div>
          <div class="node n-v4"><div class="nh red"><svg class="ic nc"><use href="#i-chev"/></svg>Value</div><div class="r o">Value</div><div class="inp">1.300</div></div>
          <div class="node n-v5"><div class="nh red"><svg class="ic nc"><use href="#i-chev"/></svg>Value</div><div class="r o">Value</div><div class="inp">0.050</div></div>
          <div class="mn m4"><svg class="ic nc2"><use href="#i-chevr"/></svg><span>Power</span><i></i></div>
          <div class="mn m5"><svg class="ic nc2"><use href="#i-chevr"/></svg><span>Divide</span><i></i></div>
          <div class="mn m6"><svg class="ic nc2"><use href="#i-chevr"/></svg><span>Multiply</span><i></i></div>

          <svg class="sockets" viewBox="0 0 1560 1035" aria-hidden="true">
            <g class="s-f">
              <use href="#d" x="144" y="501" width="12" height="12"/><use href="#d" x="178" y="521" width="12" height="12"/><use href="#h" x="178" y="535" width="12" height="12"/><use href="#d" x="267" y="527" width="12" height="12"/>
              <use href="#d" x="297" y="549" width="12" height="12"/><use href="#h" x="297" y="561" width="12" height="12"/><use href="#d" x="386" y="554" width="12" height="12"/>
              <use href="#d" x="415" y="573" width="12" height="12"/><use href="#h" x="415" y="587" width="12" height="12"/><use href="#d" x="504" y="579.500" width="12" height="12"/>
              <use href="#d" x="535" y="579.500" width="12" height="12"/>
              <use href="#d" x="819" y="493.500" width="12" height="12"/><use href="#d" x="875" y="486" width="12" height="12"/>
              <use href="#d" x="701" y="712.500" width="12" height="12"/><use href="#d" x="701" y="732.500" width="12" height="12"/><use href="#d" x="701" y="752.500" width="12" height="12"/>
              <use href="#d" x="1098" y="711.500" width="12" height="12"/><use href="#d" x="1098" y="731.500" width="12" height="12"/><use href="#d" x="1098" y="751.500" width="12" height="12"/>
              <use href="#d" x="701" y="832" width="12" height="12"/>
              <use href="#d" x="732" y="889" width="12" height="12"/><use href="#h" x="732" y="902" width="12" height="12"/><use href="#d" x="821" y="895" width="12" height="12"/>
              <use href="#d" x="847" y="841" width="12" height="12"/><use href="#d" x="847" y="855" width="12" height="12"/><use href="#d" x="936" y="847.500" width="12" height="12"/>
              <use href="#d" x="979" y="812" width="12" height="12"/><use href="#h" x="979" y="826" width="12" height="12"/><use href="#d" x="1068" y="819" width="12" height="12"/>
            </g>
            <g class="s-f">
              <circle cx="152" cy="562" r="3.800"/><circle cx="274" cy="590" r="3.800"/><circle cx="392" cy="617" r="3.800"/><circle cx="707" cy="967" r="3.800"/><circle cx="942" cy="910" r="3.800"/>
            </g>
            <g class="s-g">
              <circle cx="509" cy="525" r="3.800"/><circle cx="541" cy="525" r="3.800"/><circle cx="667" cy="452" r="3.800"/><circle cx="881" cy="452" r="3.800"/><circle cx="1008" cy="429.600" r="3.800"/><circle cx="1103" cy="495" r="3.800"/><circle cx="1103" cy="515" r="3.800"/><circle cx="1011" cy="611" r="3.800"/><circle cx="1229" cy="472" r="3.800"/><circle cx="1288" cy="580" r="3.800"/><circle cx="1415" cy="557" r="3.800"/><circle cx="1444" cy="575" r="3.800"/>
            </g>
            <g class="s-b">
              <use href="#h" x="535" y="539" width="12" height="12"/><use href="#h" x="875" y="466" width="12" height="12"/><use href="#d" x="819" y="513.500" width="12" height="12"/><use href="#d" x="701" y="852" width="12" height="12"/>
              <circle cx="1103" cy="535" r="3.800"/><circle cx="852" cy="681" r="3.800"/>
            </g>
            <g class="s-v">
              <use href="#d" x="546" y="776" width="12" height="12"/><use href="#d" x="574" y="776" width="12" height="12"/><use href="#d" x="1225" y="689" width="12" height="12"/><use href="#d" x="1282" y="594" width="12" height="12"/>
              <circle cx="1011" cy="551" r="3.800"/><circle cx="1011" cy="571" r="3.800"/><circle cx="1011" cy="591" r="3.800"/>
            </g>
            <g class="s-s"><circle cx="541" cy="565" r="3.800"/><circle cx="698" cy="570" r="3.800"/><circle cx="580" cy="908" r="3.800"/></g>
            <circle class="s-o" cx="852" cy="661" r="3.800"/>
          </svg>
        </div>
        <span class="vscroll"></span><span class="hscroll"></span>
        <span class="sidearrow ne-arrow"><svg class="ic"><use href="#i-chevr"/></svg></span>
      </section>
    </div>

    <div class="rightcol">
      <section class="area outliner">
        <div class="hbar oh">
          <div class="box w32"><svg class="ic"><use href="#i-tree"/></svg><svg class="ic ch"><use href="#i-chev"/></svg></div>
          <div class="box w32 ml5"><svg class="ic"><use href="#i-layer"/></svg><svg class="ic ch"><use href="#i-chev"/></svg></div>
          <div class="search s1"><svg class="ic"><use href="#i-search"/></svg></div>
          <div class="box w32 right"><svg class="ic"><use href="#i-filter"/></svg><svg class="ic ch"><use href="#i-chev"/></svg></div>
          <div class="box w19 ml6 lit c"><svg class="ic"><use href="#i-newc"/></svg></div>
        </div>
        <div class="olist">
          <div class="orow in0"><svg class="ic"><use href="#i-coll"/></svg><span class="ol">Scene Collection</span></div>
          <div class="orow in1"><i class="tri down"></i><svg class="ic"><use href="#i-coll"/></svg><span class="ol">Collection</span><div class="rs"><i class="chk on"></i><svg class="ic"><use href="#i-eye"/></svg><svg class="ic"><use href="#i-rcam"/></svg></div></div>
          <div class="orow in2 tr"><i class="tri"></i><svg class="ic or"><use href="#i-ocam"/></svg><span class="ol lw59">Camera</span><span class="datab"><svg class="ic tl"><use href="#i-dcam"/></svg></span><div class="rs"><i class="chk none"></i><svg class="ic"><use href="#i-eye"/></svg><svg class="ic"><use href="#i-rcam"/></svg></div></div>
          <div class="orow in2 tr"><i class="tri"></i><svg class="ic or"><use href="#i-olight"/></svg><span class="ol lw48">Light</span><svg class="ic tl"><use href="#i-dlight"/></svg><div class="rs"><i class="chk none"></i><svg class="ic"><use href="#i-eye"/></svg><svg class="ic"><use href="#i-rcam"/></svg></div></div>
          <div class="orow in1 faded"><i class="tri none"></i><svg class="ic"><use href="#i-coll"/></svg><span class="ol">From Mesh</span><div class="rs"><i class="chk"></i><svg class="ic"><use href="#i-eye"/></svg><svg class="ic"><use href="#i-rcam"/></svg></div></div>
          <div class="orow in1"><i class="tri down"></i><span class="icb"><svg class="ic"><use href="#i-coll"/></svg></span><span class="ol">From Curve</span><div class="rs"><i class="chk on"></i><svg class="ic"><use href="#i-eye"/></svg><svg class="ic"><use href="#i-rcam"/></svg></div></div>
          <div class="orow in2 tr"><i class="tri"></i><svg class="ic or"><use href="#i-ocurve"/></svg><span class="ol lw117">BezierCurve Profile</span><svg class="ic tl"><use href="#i-dcurve"/></svg><div class="rs"><i class="chk none"></i><svg class="ic"><use href="#i-eye"/></svg><svg class="ic"><use href="#i-rcam"/></svg></div></div>
          <div class="orow in2 tr"><i class="tri"></i><span class="icb"><svg class="ic or"><use href="#i-ocurve"/></svg></span><span class="ol lw114">BezierCurve Wake</span><svg class="ic bl"><use href="#i-wrench"/></svg><svg class="ic tl ml2"><use href="#i-dcurve"/></svg><div class="rs"><i class="chk none"></i><svg class="ic"><use href="#i-eye"/></svg><svg class="ic"><use href="#i-rcam"/></svg></div></div>
        </div>
      </section>

      <section class="area props">
        <div class="hbar ph">
          <div class="box w32"><svg class="ic"><use href="#i-props"/></svg><svg class="ic ch"><use href="#i-chev"/></svg></div>
          <div class="search s2"><svg class="ic"><use href="#i-search"/></svg></div>
          <div class="box w19 right c"><svg class="ic ch"><use href="#i-chev"/></svg></div>
        </div>
        <div class="pbody">
          <aside class="ptabs">
            <div class="tgrp"><span><svg class="ic tb"><use href="#i-tool"/></svg></span></div>
            <div class="tgrp"><span><svg class="ic tb"><use href="#i-rnd"/></svg></span><span><svg class="ic tb"><use href="#i-out"/></svg></span><span><svg class="ic tb"><use href="#i-layer"/></svg></span><span><svg class="ic tb"><use href="#i-scene"/></svg></span><span><svg class="ic tb rd"><use href="#i-world"/></svg></span></div>
            <div class="tgrp"><span><svg class="ic tb"><use href="#i-cbox"/></svg></span></div>
            <div class="tgrp"><span><svg class="ic tb"><use href="#i-objt"/></svg></span><span><svg class="ic tb bl"><use href="#i-wrenchf"/></svg></span><span><svg class="ic tb bl"><use href="#i-part"/></svg></span><span><svg class="ic tb bl"><use href="#i-phys"/></svg></span><span class="act"><svg class="ic tb tl2"><use href="#i-dcurve"/></svg></span><span><svg class="ic tb"><use href="#i-matt"/></svg></span></div>
            <div class="tgrp"><span><svg class="ic tb"><use href="#i-tex"/></svg></span></div>
          </aside>
          <div class="pmain">
            <div class="pcrumb"><svg class="ic"><use href="#i-obj"/></svg><span>BezierCurve Wake</span><svg class="ic mid"><use href="#i-chevr"/></svg><svg class="ic"><use href="#i-dcurve"/></svg><span>BezierCurve</span><svg class="ic dim right"><use href="#i-pin"/></svg></div>
            <div class="datasel"><div class="ds-l"><svg class="ic"><use href="#i-dcurve"/></svg><svg class="ic ch"><use href="#i-chev"/></svg></div><div class="ds-f">BezierCurve</div><div class="ds-s"><svg class="ic"><use href="#i-shield"/></svg></div></div>
            <div class="panel open">
              <div class="phead"><svg class="ic pc"><use href="#i-chev"/></svg><span>Shape</span><i class="grip"></i></div>
              <div class="dd23"><span class="blue">2D</span><span>3D</span></div>
              <div class="pr mt7"><label>Resolution Preview U</label><div class="num">24</div></div>
              <div class="pr mt4"><label>Render U</label><div class="num">0</div><i class="dot"></i></div>
              <div class="pr mt12"><label>Twist Method</label><div class="drop"><span>Minimum</span><svg class="ic ch"><use href="#i-chev"/></svg></div><i class="dot"></i></div>
              <div class="pr mt4"><label>Smooth</label><div class="num">0.00</div><i class="dot"></i></div>
              <div class="pr mt15"><label>Fill Mode</label><div class="drop"><span>None</span><svg class="ic ch"><use href="#i-chev"/></svg></div><i class="dot"></i></div>
              <div class="pr mt15"><label>Curve Deform</label><div class="ck"><em></em>Radius</div><i class="dot"></i></div>
              <div class="pr mt2"><label></label><div class="ck"><em></em>Stretch</div><i class="dot"></i></div>
              <div class="pr mt2"><label></label><div class="ck"><em></em>Bounds Clamp</div><i class="dot"></i></div>
            </div>
            <div class="panel"><div class="phead"><svg class="ic pc"><use href="#i-chevr"/></svg><span>Texture Space</span><i class="grip"></i></div></div>
            <div class="panel"><div class="phead"><svg class="ic pc"><use href="#i-chevr"/></svg><span>Geometry</span><i class="grip"></i></div></div>
            <div class="panel"><div class="phead"><svg class="ic pc"><use href="#i-chevr"/></svg><b class="pcheck"></b><span>Path Animation</span><i class="grip"></i></div></div>
            <div class="panel"><div class="phead"><svg class="ic pc"><use href="#i-chevr"/></svg><span>Active Spline</span><i class="grip"></i></div></div>
            <div class="panel"><div class="phead"><svg class="ic pc"><use href="#i-chevr"/></svg><span>Shape Keys</span><i class="grip"></i></div></div>
            <div class="panel"><div class="phead"><svg class="ic pc"><use href="#i-chevr"/></svg><span>Custom Properties</span><i class="grip"></i></div></div>
          </div>
        </div>
      </section>
    </div>
  </main>

  <footer class="status">
    <div class="hint h1"><svg class="ic"><use href="#i-mousel"/></svg><span>Select</span></div>
    <div class="hint h2"><svg class="ic"><use href="#i-mousem"/></svg><span>Rotate View</span></div>
    <div class="hint h3"><svg class="ic"><use href="#i-mouse"/></svg><span>Object Context Menu</span></div>
    <div class="stats">From Curve | BezierCurve Wake | Verts:1,225 | Faces:1,152 | Tris:2,304 | Objects:0/5 | 3.6.8</div>
  </footer>
</div>
</body>
</html>
```
FILE: styles.css
```css
* { box-sizing: border-box; }
html, body { margin: 0; padding: 0; height: 100%; overflow: hidden; background: #161616; }
body { font: 11px "DejaVu Sans Condensed", "DejaVu Sans", sans-serif; font-stretch: condensed; color: #d6d6d6; white-space: nowrap; }
.defs { position: absolute; width: 0; height: 0; }
p { margin: 0; }
em, i, b { font-style: normal; font-weight: normal; }

.ic { width: 16px; height: 16px; flex: none; fill: none; stroke: currentColor; stroke-width: 1.1; color: #dcdcdc; overflow: visible; }
.ic.ch { width: 12px; height: 12px; stroke-width: 1.5; }
.ic.dim { color: #8a8a8a; }
.ic.off { color: #6a6a6a; }
.ic.wh { color: #fff; }
.ic.or { color: #c9813f; }
.ic.tl { color: #19a98a; }
.ic.bl { color: #5680c2; }
.ic.rd { color: #a54b54; }
.ic.tl2 { color: #1ecba3; }

.app { width: 1920px; height: 1035px; display: grid; grid-template-rows: 27px 985px 23px; }

/* top bar */
.topbar { background: #1d1d1d; display: flex; align-items: flex-start; position: relative; }
.logo { width: 20px; height: 16px; margin: 5px 0 0 7px; color: #e4e4e4; }
.mainmenu { display: flex; margin: 7px 0 0 8px; width: 219px; }
.mainmenu span:nth-child(1) { width: 33px; }
.mainmenu span:nth-child(2) { width: 34px; }
.mainmenu span:nth-child(3) { width: 50px; }
.mainmenu span:nth-child(4) { width: 55px; }
.tabs { display: flex; margin: 6px 0 0 0; height: 21px; color: #a2a2a2; }
.tabs span { padding: 3px 10px 0; }
.tabs span:nth-child(1) { width: 54px; }
.tabs span:nth-child(2) { width: 65px; }
.tabs span:nth-child(3) { width: 66px; }
.tabs span:nth-child(4) { width: 72px; }
.tabs span:nth-child(5) { width: 86px; }
.tabs span:nth-child(6) { width: 59px; }
.tabs span:nth-child(7) { width: 71px; }
.tabs span:nth-child(8) { width: 70px; }
.tabs span:nth-child(9) { width: 83px; }
.tabs span:nth-child(10) { width: 102px; padding-left: 9px; }
.tabs span:nth-child(11) { width: 65px; padding-left: 11px; }
.tabs .on { background: #303030; color: #e4e4e4; border-radius: 4px 4px 0 0; }
.tabs .plus { font-size: 16px; padding: 0; margin-left: 4px; line-height: 18px; }
.scenegroup { position: absolute; top: 3px; height: 20px; display: flex; border-radius: 4px; box-shadow: inset 0 0 0 1px #3a3a3a; background: #282828; overflow: hidden; }
.scene-a { left: 1523px; width: 191px; }
.scene-b { left: 1720px; width: 191px; }
.scenegroup .ib { width: 31px; border: 0; border-right: 1px solid #3a3a3a; border-radius: 0; background: #282828; }
.scenegroup .field { flex: 1; display: flex; align-items: center; justify-content: space-between; padding: 0 3px 0 8px; background: #1d1d1d; color: #dcdcdc; }
.sq { width: 20px; display: flex; align-items: center; justify-content: center; background: #3a3a3a; }
.sq.lit { background: #545454; }
.sq .ic { width: 14px; height: 14px; }

/* layout */
.screen { display: grid; grid-template-columns: 1559px 358px; column-gap: 3px; height: 985px; }
.leftcol { display: flex; flex-direction: column; gap: 4px; }
.toprow { display: flex; gap: 5px; height: 338px; }
.rightcol { display: flex; flex-direction: column; gap: 3px; }
.area { position: relative; overflow: hidden; border-radius: 6px; }

/* header bars */
.hbar { height: 25px; display: flex; align-items: center; position: relative; background: rgba(48,48,48,.95); flex: none; }
.box { height: 20px; display: flex; align-items: center; justify-content: center; gap: 1px; border-radius: 4px; background: #282828; box-shadow: inset 0 0 0 1px #3a3a3a; overflow: hidden; flex: none; }
.box.c { justify-content: center; }
.box.lit { background: #545454; }
.box .end { margin-left: auto; margin-right: 1px; }
.box .bt { margin-left: 5px; color: #dcdcdc; }
.box:has(.bt) { justify-content: flex-start; padding-left: 4px; }
.seg { height: 20px; min-width: 18px; display: inline-flex; align-items: center; justify-content: center; }
.box:has(.seg) { justify-content: flex-start; }
.seg .ic { width: 14px; height: 14px; }
.seg.lit { background: #545454; }
.seg.blue, .blue { background: #4772b3; color: #fff; }
.w18 { width: 18px; } .w19 { width: 19px; } .w32 { width: 32px; } .w37 { width: 37px; } .w38 { width: 38px; } .w39 { width: 39px; } .w50 { width: 50px; } .w51 { width: 51px; } .w78 { width: 78px; } .w81 { width: 81px; } .w96 { width: 96px; } .w109 { width: 109px; }
.ml5 { margin-left: 5px; } .ml6 { margin-left: 6px; } .ml7 { margin-left: 7px; } .ml8 { margin-left: 8px; } .ml9 { margin-left: 9px; } .ml17 { margin-left: 17px; } .ml73 { margin-left: 73px; } .ml2 { margin-left: 6px; }
.menus { display: flex; margin-left: 13px; width: 178px; flex: none; color: #d6d6d6; }
.menus span:nth-child(1) { width: 40px; } .menus span:nth-child(2) { width: 46px; } .menus span:nth-child(3) { width: 34px; }
.nm { margin-left: 12px; width: 599px; }
.right { margin-left: auto; }

/* viewports */
.vp { background: #3a3a3a; }
.vp-l { width: 655px; }
.vp-r { width: 899px; }
.scene3d { position: absolute; left: 0; top: 0; width: 100%; height: 100%; }
.g { stroke: #4c4c4c; fill: none; }
.gx { stroke: #874450; fill: none; }
.gy { stroke: #5e8a1e; fill: none; }
.giz text { font: bold 11px "DejaVu Sans", sans-serif; text-anchor: middle; fill: #152535; }
.overlaytext { position: absolute; color: #fff; text-shadow: 0 1px 1px #000; line-height: 18px; font-size: 11.2px; }
.ot-l { left: 10px; top: 33px; }
.ot-r { left: 62px; top: 58px; }
.navstack { position: absolute; display: flex; flex-direction: column; gap: 2px; }
.nav-l { left: 619px; top: 116px; }
.nav-r { left: 863px; top: 142px; }
.navstack span { width: 28px; height: 28px; border-radius: 50%; background: #2c2c2c; display: flex; align-items: center; justify-content: center; }
.navstack .gr { background: #6f7071; }
.sidearrow { position: absolute; left: 892px; top: 65px; width: 7px; height: 16px; background: #2f2f2f; border-radius: 4px 0 0 4px; display: flex; align-items: center; justify-content: center; transform: none; }
.sidearrow .ic { width: 9px; height: 9px; transform: scaleX(-1); color: #aaa; stroke-width: 1.6; }
.toolsettings { height: 26px; background: rgba(48,48,48,.8); position: relative; display: flex; align-items: center; }
.modes { margin-left: 42px; display: flex; height: 19px; border-radius: 3px; overflow: hidden; margin-top: 2px; }
.modes span { width: 19px; background: #545454; display: flex; align-items: center; justify-content: center; border-right: 1px solid #3a3a3a; }
.modes span.blue { background: #4772b3; }
.modes .ic { width: 14px; height: 14px; }
.options { position: absolute; right: 7px; top: 4px; width: 62px; height: 19px; color: #e0e0e0; gap: 3px; background: #2c2c2c; }
.toolbar { position: absolute; left: 6px; top: 59px; display: flex; flex-direction: column; gap: 7px; width: 38px; }
.tg { display: flex; flex-direction: column; border-radius: 4px; overflow: hidden; gap: 1px; background: #3a3a3a; }
.tg span { height: 34px; background: #272727; display: flex; align-items: center; justify-content: center; }
.tg span.blue { background: #4772b3; }
.tic { width: 22px; height: 22px; fill: none; stroke: currentColor; color: #e4e4e4; overflow: visible; }

/* node editor */
.ne { height: 643px; background: #1d1d1d; background-image: radial-gradient(#282828 .8px, transparent 1px); background-size: 18.300px 18.300px; }
.ne-h { height: 24px; background: rgba(38,38,38,.8); z-index: 3; }
.idgroup { display: flex; height: 19px; }
.ib2 { width: 30px; height: 19px; border-radius: 4px 0 0 4px; }
.idf { width: 120px; background: #1d1d1d; display: flex; align-items: center; padding-left: 8px; box-shadow: inset 0 0 0 1px #303030; }
.idgroup .sq { background: #3a3a3a; width: 20px; }
.idgroup .sq:last-child { border-radius: 0 4px 4px 0; }
.pinne { margin-left: 8px; color: #999; }
.ne-right { position: absolute; left: 1433px; display: flex; align-items: center; gap: 9px; height: 20px; }
.r2 { display: flex; align-items: center; margin-right: 0; }
.ne-right .ic { width: 14px; height: 14px; }
.ne-right .ch { width: 10px; height: 10px; margin-left: -8px; }
.crumbs { position: relative; z-index: 3; display: flex; align-items: center; height: 20px; margin-top: 12px; padding-left: 0; gap: 0; pointer-events: none; }
.crumbs > .ic { width: 14px; height: 14px; }
.crumbs span { margin-left: 8px; }
.crumbs .cr0 { width: 9px; margin-right: 11px; }
.crumbs .cr1 { margin: 0 11px; width: 9px; }
.crumbs span:nth-of-type(1) { width: 94px; margin-left: 8px; }
.crumbs span:nth-of-type(2) { width: 82px; }
.canvas { position: absolute; left: 0; top: -369px; width: 1560px; height: 1035px; font-size: 10.4px; }
.wires, .sockets { position: absolute; left: 0; top: 0; width: 1560px; height: 1035px; fill: none; }
.sockets { z-index: 2; }
.wg path { stroke: #808080; stroke-width: 1; fill: none; }
.wd path { stroke: #787878; stroke-width: 1.2; fill: none; stroke-dasharray: 6 1.500; }
.wgeo path { stroke: #00d6a3; stroke-width: 1.700; fill: none; }
.wvec path { stroke: #45459a; stroke-width: 1; fill: none; }
.wvec .thick { stroke-width: 2; }
.s-f { fill: #a1a1a1; }
.s-g { fill: #00d6a3; }
.s-b { fill: #cca6d6; }
.s-v { fill: #6363c7; }
.s-s { fill: #70b2ff; }
.s-o { fill: #ed9e5c; }

.node { position: absolute; background: #303030; border-radius: 5px; padding-bottom: 6px; box-shadow: 0 2px 6px rgba(0,0,0,.45); color: #d8d8d8; }
.nh { height: 18px; display: flex; align-items: center; padding: 0 0 1px 7px; border-radius: 5px 5px 0 0; margin-bottom: 3px; gap: 4px; box-shadow: inset 0 -1px 0 rgba(0,0,0,.25); }
.nh.gh { height: 20px; margin-bottom: 2px; }
.n-spline .nh { margin-bottom: 2px; }
.red { background: #83314a; }
.grn { background: #1d725e; }
.blu { background: #246283; }
.navy { background: #1e2850; }
.blk { background: #1b1b1b; }
.nc { width: 12px; height: 12px; stroke-width: 1.3; }
.r { height: 20px; display: flex; align-items: center; padding: 0 10px; }
.r.o { justify-content: flex-end; padding-right: 9px; }
.mt3 { margin-top: 3px; } .mt1 { margin-top: 1px; }
.tight { margin-top: 4px; }
.nm2 { justify-content: space-between; padding-right: 10px; }
.txt { width: 60px; height: 18px; background: #1d1d1d; border-radius: 3px; padding-left: 6px; display: flex; align-items: center; color: #dcdcdc; }
.inp { height: 18px; margin: 9px 10px 0; background: #545454; border-radius: 3px; display: flex; align-items: center; justify-content: center; color: #e4e4e4; box-shadow: 0 1px 0 #262626; }
.sel { height: 17px; margin: 6px 9px 0 10px; background: #282828; border-radius: 3px; box-shadow: inset 0 0 0 1px #3f3f3f; display: flex; align-items: center; justify-content: space-between; padding: 0 2px 0 7px; }
.sel.first { margin-top: 9px; }
.sel .ic { width: 10px; height: 10px; }
.cb { width: 13px; height: 13px; background: #545454; border-radius: 3px; margin-right: 4px; margin-left: 0; }
.pair { display: flex; margin: 10px 10px 0; height: 16px; border-radius: 3px; overflow: hidden; text-align: center; line-height: 16px; }
.pair span { flex: 1; background: #545454; }
.pair .blue { background: #4772b3; }
.objf { margin: 7px 10px 0; height: 16px; display: flex; align-items: center; background: #282828; border-radius: 3px; box-shadow: inset 0 0 0 1px #3f3f3f; padding: 0 3px; gap: 6px; }
.objf span { flex: 1; }
.objf .ic { width: 13px; height: 13px; }

.n-spline { left: 37px; top: 477px; width: 113px; }
.n-v1 { left: 38px; top: 531px; width: 114px; }
.n-v2 { left: 183px; top: 559px; width: 91px; }
.n-v3 { left: 301px; top: 586px; width: 91px; }
.n-gi { left: 416px; top: 493px; width: 93px; }
.n-store { left: 541px; top: 421px; width: 126px; }
.n-scr { left: 881px; top: 398px; width: 127px; }
.n-na1 { left: 698px; top: 468px; width: 127px; }
.n-oi { left: 852px; top: 520px; width: 159px; }
.n-c2m { left: 1103px; top: 441px; width: 126px; }
.n-sp { left: 1288px; top: 526px; width: 127px; }
.n-go { left: 1444px; top: 543px; width: 94px; }
.n-cxyz { left: 1104px; top: 664px; width: 127px; }
.n-sxyz { left: 580px; top: 688px; width: 127px; }
.n-pos { left: 425px; top: 751px; width: 127px; }
.n-na2 { left: 580px; top: 807px; width: 127px; }
.n-v4 { left: 580px; top: 936px; width: 127px; }
.n-v5 { left: 852px; top: 879px; width: 90px; }
.n-oi .o, .n-oi .r { padding-right: 10px; }
.n-na1 .sel, .n-na2 .sel { margin-left: 9px; }

.mn { position: absolute; height: 27px; width: 90px; border-radius: 13px; background: #246283; display: flex; align-items: center; color: #dcdcdc; padding-left: 9px; box-shadow: 0 2px 5px rgba(0,0,0,.45); gap: 2px; }
.mn i { margin-left: auto; margin-right: 8px; width: 5px; height: 9px; border-left: 1.500px solid #6a9ab6; border-right: 1.500px solid #6a9ab6; }
.nc2 { width: 12px; height: 12px; stroke-width: 1.200; }
.m1 { left: 183px; top: 520px; }
.m2 { left: 302px; top: 547px; }
.m3 { left: 420px; top: 572px; }
.m4 { left: 737px; top: 888px; }
.m5 { left: 852px; top: 840px; }
.m6 { left: 984px; top: 811px; }
.vscroll { position: absolute; left: 1553px; top: 50px; width: 3px; height: 579px; background: #383838; border-radius: 2px; z-index: 3; }
.hscroll { position: absolute; left: 0; top: 638px; width: 1550px; height: 3px; background: #383838; border-radius: 2px; z-index: 3; }
.ne-arrow { top: 36px; left: 1552px; background: transparent; z-index: 3; }

/* outliner */
.outliner { height: 276px; background: #282828; }
.oh { padding: 0 6px 0 7px; height: 27px; background: #303030; }
.search { height: 19px; background: #1d1d1d; border-radius: 4px; box-shadow: inset 0 0 0 1px #333; display: flex; align-items: center; padding-left: 4px; }
.search .ic { width: 14px; height: 14px; }
.s1 { width: 110px; margin-left: 37px; }
.s2 { width: 110px; margin-left: 85px; }
.olist { height: 249px; background: repeating-linear-gradient(#282828 0 20px, #2c2c2c 20px 40px); }
.orow { height: 20px; display: flex; align-items: center; position: relative; }
.orow .ic { width: 16px; height: 16px; }
.in0 { padding-left: 23px; }
.in1 { padding-left: 27px; }
.in2 { padding-left: 47px; }
.in0 .ol { margin-left: 5px; }
.in1 .ol { margin-left: 5px; }
.in2 .ol { margin-left: 6px; }
.in2.tr::before { content: ""; position: absolute; left: 30px; top: 0; height: 20px; border-left: 1px solid #484848; }
.tri { width: 0; height: 0; margin-right: 9px; border-left: 6px solid #aaa; border-top: 3.500px solid transparent; border-bottom: 3.500px solid transparent; }
.tri.down { border-left: 3.500px solid transparent; border-right: 3.500px solid transparent; border-top: 6px solid #aaa; border-bottom: 0; margin-right: 9px; }
.tri.none { visibility: hidden; border-left-width: 7px; margin-right: 9px; }
.lw59 { width: 59px; } .lw48 { width: 48px; } .lw117 { width: 117px; } .lw114 { width: 114px; }
.datab { width: 20px; height: 20px; background: #545454; border-radius: 4px; display: flex; align-items: center; justify-content: center; }
.icb { width: 20px; height: 20px; background: #545454; border-radius: 5px; display: flex; align-items: center; justify-content: center; }
.in1 .icb { margin: 0 -1px 0 -4px; }
.in2 .icb { margin: 0 -2px 0 -2px; }
.rs { position: absolute; left: 292px; top: 0; height: 20px; display: flex; align-items: center; gap: 5px; }
.rs .ic { width: 15px; height: 15px; }
.chk { width: 11px; height: 11px; border: 1px solid #bbb; border-radius: 1px; position: relative; margin-right: 2px; }
.chk.none { visibility: hidden; }
.chk.on { background: #d8d8d8; }
.chk.on::after { content: ""; position: absolute; left: 2.500px; top: 0; width: 4px; height: 7px; border: solid #222; border-width: 0 1.500px 1.500px 0; transform: rotate(40deg); }
.faded { opacity: .45; }

/* properties */
.props { height: 706px; background: #2f2f2f; }
.ph { padding: 0 9px 0 8px; height: 24px; background: #303030; }
.pbody { display: flex; height: 682px; background: #2f2f2f; }
.ptabs { width: 28px; background: #1f1f1f; flex: none; padding-top: 9px; }
.tgrp { border-bottom: 1px solid #2c2c2c; margin-bottom: 6px; }
.tgrp:nth-child(3) { margin-top: 2px; }
.tgrp span { display: flex; align-items: center; justify-content: center; height: 28px; }
.tgrp span.act { background: #2f2f2f; border-radius: 4px 0 0 4px; margin-left: 2px; padding-right: 2px; height: 26px; margin-top: 1px; margin-bottom: 1px; }
.ic.tb { width: 16px; height: 16px; color: #bcbcbc; stroke-width: 1.1; }
.ic.tb.bl { color: #5680c2; }
.ic.tb.rd { color: #a54b54; }
.ic.tb.tl2 { color: #1ecba3; }
.pmain { width: 313px; margin-left: 8px; }
.pcrumb { display: flex; align-items: center; height: 20px; margin-top: 9px; padding-left: 3px; position: relative; }
.pcrumb > .ic { width: 14px; height: 14px; }
.pcrumb span { margin-left: 6px; }
.pcrumb span:first-of-type { width: 100px; margin-left: 9px; }
.pcrumb .mid { width: 10px; margin: 0 8px 0 3px; }
.pcrumb .right { margin-left: auto; margin-right: 2px; }
.datasel { display: flex; height: 19px; margin-top: 17px; border-radius: 4px; overflow: hidden; }
.ds-l { width: 31px; background: #282828; display: flex; align-items: center; justify-content: center; box-shadow: inset 0 0 0 1px #3a3a3a; }
.ds-l .ic { width: 13px; height: 13px; }
.ds-f { flex: 1; background: #1d1d1d; display: flex; align-items: center; padding-left: 8px; color: #dcdcdc; }
.ds-s { width: 21px; background: #545454; display: flex; align-items: center; justify-content: center; }
.ds-s .ic { width: 14px; height: 14px; }
.panel { background: #3d3d3d; border-radius: 5px; margin-top: 2px; height: 25px; }
.panel.open { height: 266px; margin-top: 10px; }
.phead { height: 25px; display: flex; align-items: center; position: relative; padding-left: 8px; }
.open .phead { height: 26px; }
.pc { width: 11px; height: 11px; margin-right: 3px; color: #c4c4c4; }
.grip { position: absolute; right: 8px; top: 10px; width: 11px; height: 5px; background-image: radial-gradient(#707070 .6px, transparent .9px); background-size: 3px 3px; }
.pcheck { width: 12px; height: 12px; margin: 0 4px 0 0; background: #4772b3; border-radius: 2px; position: relative; }
.pcheck::after { content: ""; position: absolute; left: 4px; top: 1px; width: 4px; height: 7px; border: solid #fff; border-width: 0 1.500px 1.500px 0; transform: rotate(40deg); }
.dd23 { display: flex; margin: 8px 9px 0; height: 18px; border-radius: 3px; overflow: hidden; gap: 1px; text-align: center; line-height: 18px; color: #e4e4e4; }
.dd23 span { flex: 1; background: #545454; }
.dd23 span.blue { background: #4772b3; }
.pr { display: grid; grid-template-columns: 114px 160px 22px; column-gap: 10px; height: 18px; align-items: center; }
.pr label { text-align: right; color: #d0d0d0; white-space: nowrap; }
.pr .dot { grid-column: 3; width: 4px; height: 4px; border-radius: 50%; background: #c4c4c4; margin-left: 9px; margin-right: auto; transform: translateX(-10px); }
.mt2 { margin-top: 2px; } .mt4 { margin-top: 4px; } .mt7 { margin-top: 7px; } .mt12 { margin-top: 12px; } .mt15 { margin-top: 15px; }
.num { height: 18px; background: #545454; border-radius: 3px; display: flex; align-items: center; justify-content: center; color: #e4e4e4; box-shadow: 0 1px 0 #2a2a2a; }
.drop { height: 18px; background: #282828; border-radius: 3px; display: flex; align-items: center; justify-content: space-between; padding: 0 2px 0 7px; color: #dcdcdc; box-shadow: 0 1px 0 #444; }
.drop .ic { width: 10px; height: 10px; }
.ck { display: flex; align-items: center; gap: 4px; color: #d6d6d6; }
.ck em { width: 13px; height: 13px; background: #545454; border-radius: 2px; }

/* status */
.status { background: #1d1d1d; display: flex; align-items: center; position: relative; color: #a6a6a6; }
.hint { display: flex; align-items: center; gap: 10px; }
.hint .ic { width: 13px; height: 13px; color: #b0b0b0; }
.h1 { margin-left: 10px; width: 212px; }
.h2 { width: 211px; }
.stats { margin-left: auto; margin-right: 14px; font-size: 11.3px; }
```
